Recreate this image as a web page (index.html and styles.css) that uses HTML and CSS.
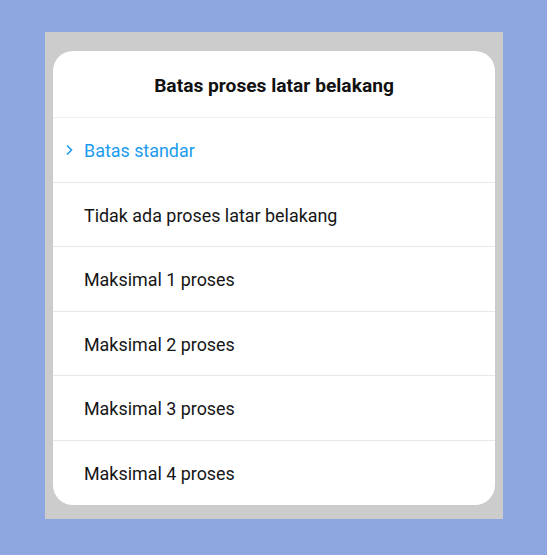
FILE: index.html
```html
<!DOCTYPE html>
<html lang="id">
<head>
    <meta charset="UTF-8">
    <meta name="viewport" content="width=device-width, initial-scale=1.0">
    <title>Batas proses latar belakang</title>
    <link rel="stylesheet" href="styles.css">
</head>
<body>
    <div class="backdrop">
        <div class="dialog">
            <div class="dialog-title">Batas proses latar belakang</div>
            <ul class="options">
                <li class="option selected">
                    <svg class="check" width="9" height="12" viewBox="0 0 9 12">
                        <path d="M2 1.5 L6.5 6 L2 10.5" fill="none" stroke="#1a9bf0" stroke-width="1.6"/>
                    </svg>
                    Batas standar
                </li>
                <li class="option">Tidak ada proses latar belakang</li>
                <li class="option">Maksimal 1 proses</li>
                <li class="option">Maksimal 2 proses</li>
                <li class="option">Maksimal 3 proses</li>
                <li class="option">Maksimal 4 proses</li>
            </ul>
        </div>
    </div>
</body>
</html>
```

FILE: styles.css
```css
body {
    margin: 0;
    padding: 32px 0 0 45px;
    background-color: #8ea7e0;
    font-family: Roboto, "Noto Sans", sans-serif;
}
.backdrop {
    width: 458px;
    height: 487px;
    box-sizing: border-box;
    padding: 19px 8px 0 8px;
    background-color: #cccccc;
}
.dialog {
    height: 454px;
    background-color: #fff;
    border-radius: 20px;
    overflow: hidden;
}
.dialog-title {
    height: 67px;
    box-sizing: border-box;
    display: flex;
    align-items: center;
    justify-content: center;
    padding-top: 2px;
    font-size: 19.2px;
    font-weight: bold;
    color: #111;
    border-bottom: 1px solid #efefef;
}
.options {
    list-style: none;
    margin: 0;
    padding: 0;
}
.option {
    position: relative;
    height: 64.5px;
    box-sizing: border-box;
    display: flex;
    align-items: center;
    padding-left: 31px;
    padding-top: 2px;
    font-size: 17.9px;
    color: #151515;
    border-bottom: 1px solid #e8e8e8;
}
.option:last-child {
    border-bottom: none;
}
.option.selected {
    color: #1a9bf0;
}
.check {
    position: absolute;
    left: 12px;
    top: 26px;
}
```
